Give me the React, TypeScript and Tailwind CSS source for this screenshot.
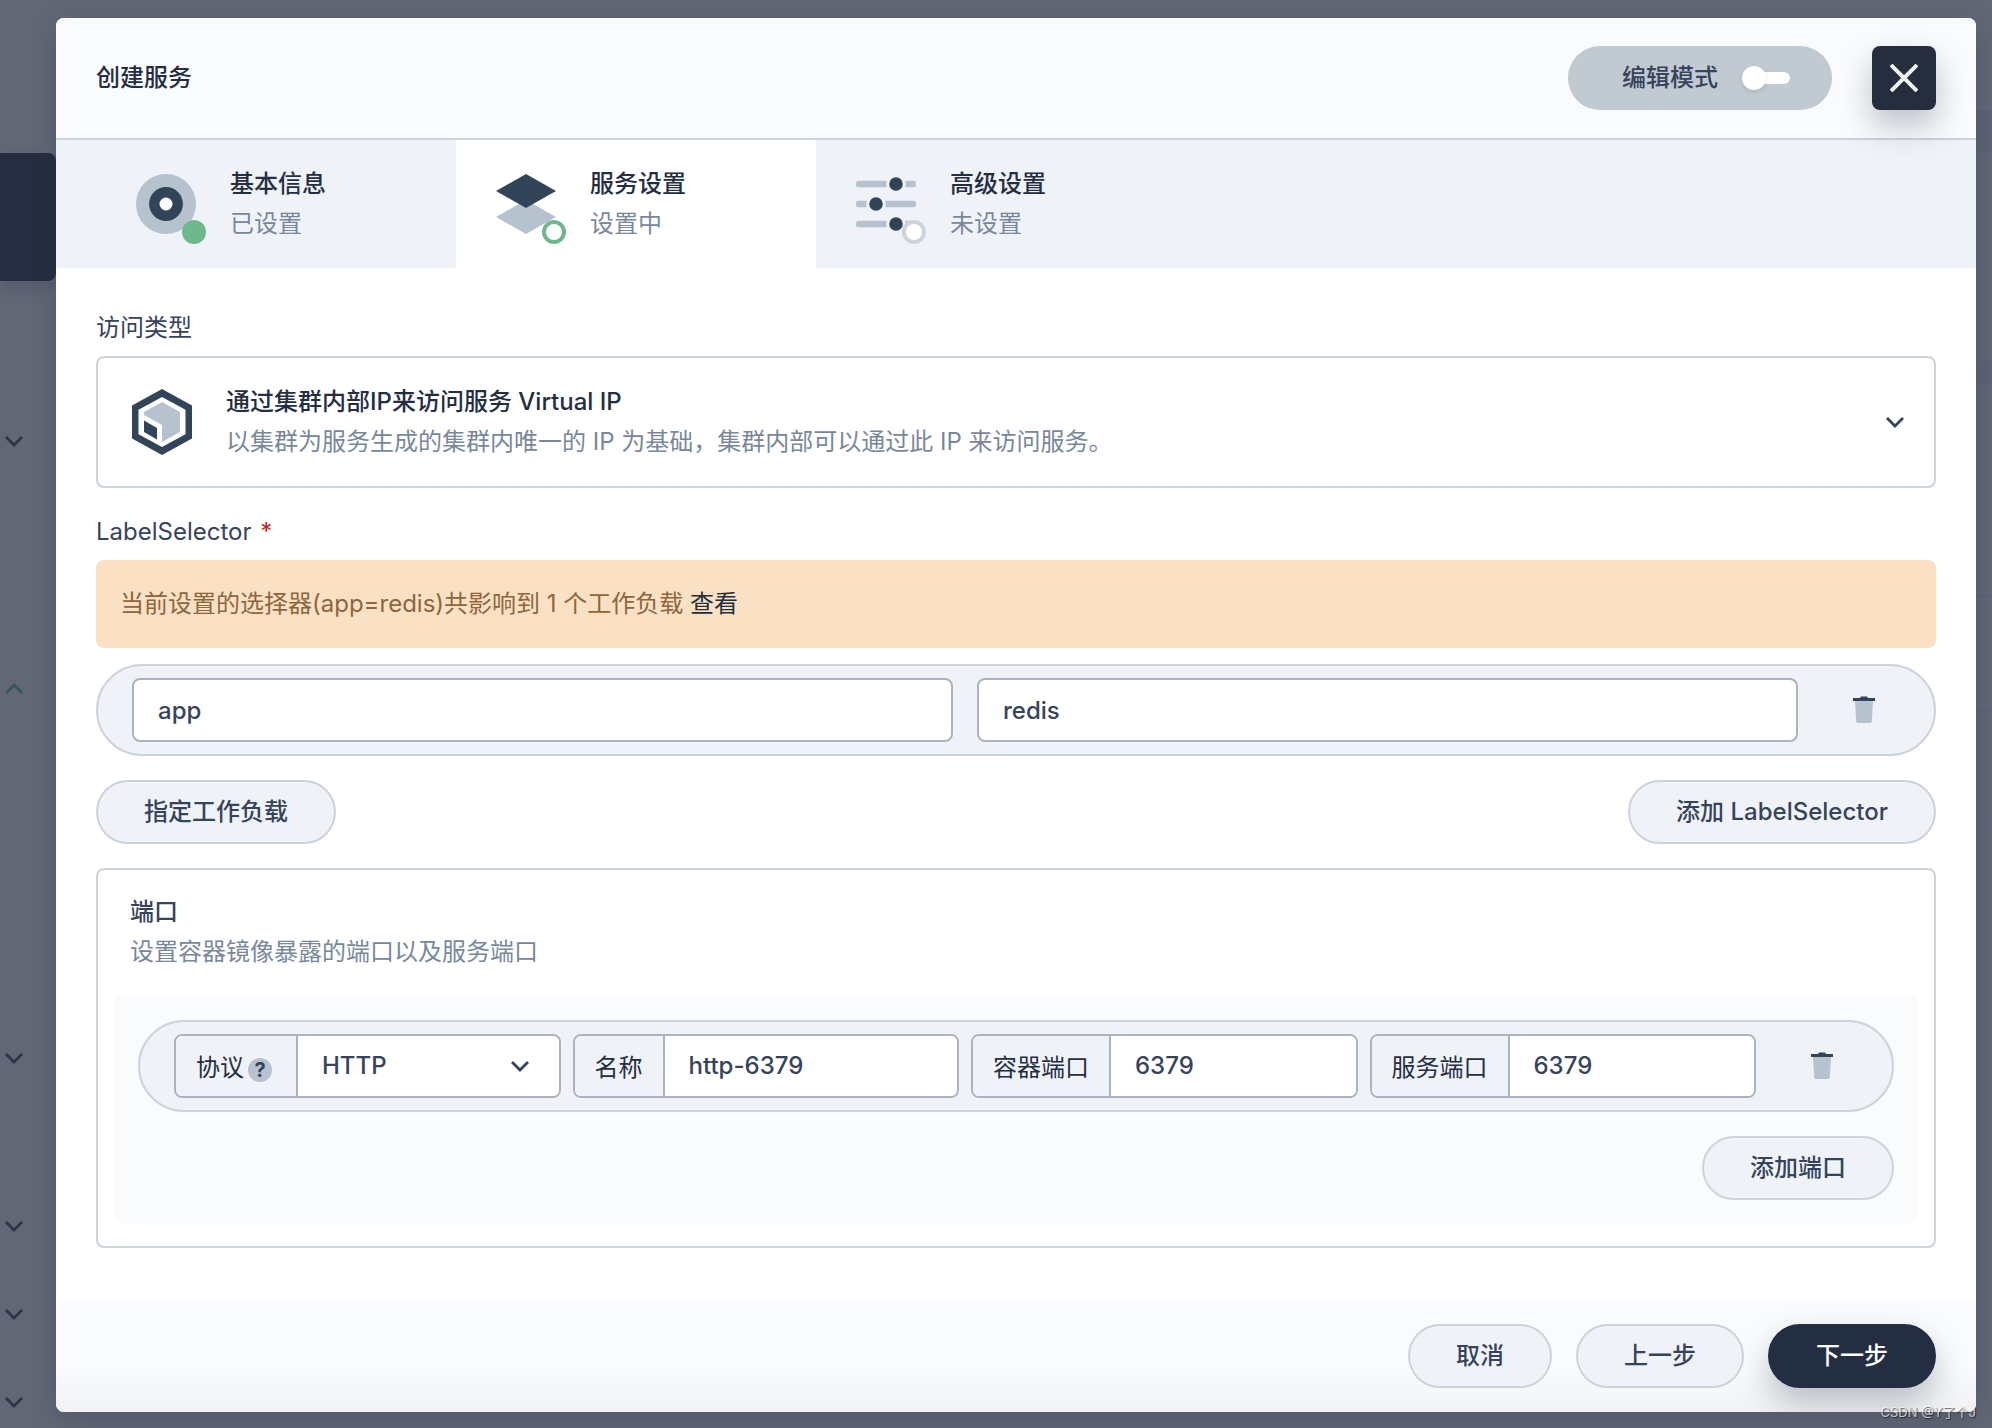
import { useState } from "react";
import type { ReactNode } from "react";

const chevronDown = "M1 1l8 8 8-8";
const chevronUp = "M1 9l8-8 8 8";

interface ChevronProps {
  up?: boolean;
  className?: string;
}

function Chevron({ up = false, className = "" }: ChevronProps) {
  return (
    <svg
      viewBox="0 0 18 10"
      fill="none"
      stroke="currentColor"
      strokeWidth={2.8}
      className={`h-[10px] w-[18px] shrink-0 overflow-visible ${className}`}
      aria-hidden="true"
    >
      <path d={up ? chevronUp : chevronDown} />
    </svg>
  );
}

function TargetIcon() {
  return (
    <svg viewBox="0 0 60 60" className="size-15" aria-hidden="true">
      <circle cx="30" cy="30" r="30" fill="#b6c2cd" />
      <circle cx="30" cy="30" r="11.7" fill="#fff" stroke="#324558" strokeWidth="10.4" />
    </svg>
  );
}

function LayersIcon() {
  return (
    <svg viewBox="0 0 60 60" className="size-15" aria-hidden="true">
      <path d="M30 26l30 17-30 17L0 43z" fill="#b6c2cd" />
      <path d="M30 0l30 17-30 17L0 17z" fill="#324558" />
    </svg>
  );
}

function SlidersIcon() {
  return (
    <svg viewBox="0 0 60 60" className="size-15" aria-hidden="true">
      <g fill="#b6c2cd">
        <rect y="6.700" width="60" height="6.600" rx="2.500" />
        <rect y="26.700" width="60" height="6.600" rx="2.500" />
        <rect y="46.700" width="60" height="6.600" rx="2.500" />
      </g>
      <g fill="#324558" stroke="#eff3f8" strokeWidth="3">
        <circle cx="40" cy="10" r="8.3" />
        <circle cx="20" cy="30" r="8.3" />
        <circle cx="40" cy="50" r="8.3" />
      </g>
    </svg>
  );
}

function ClusterIcon() {
  return (
    <svg viewBox="0 0 60 66" className="h-[66px] w-[60px] shrink-0" aria-hidden="true">
      <path d="M30 0l30 16.500v33L30 66 0 49.500v-33z" fill="#324558" />
      <path d="M30 8l23.500 12.800v24.400L30 58 6.500 45.200V20.800z" fill="#fff" />
      <path d="M30 13l18 10v20L30 53V36L12 26v-3z" fill="#b6c2cd" />
      <path d="M12 31.500l13 7.500v11.500L12 43z" fill="#324558" />
    </svg>
  );
}

function TrashIcon() {
  return (
    <svg viewBox="0 0 22 28" className="h-7 w-[22px]" aria-hidden="true">
      <path d="M2 5h18l-1.200 20.500a1.800 1.800 0 0 1-1.800 1.500H5a1.800 1.800 0 0 1-1.800-1.500z" fill="#b6c2cd" />
      <path d="M0 2h7l1-1.500h6L15 2h7v3H0z" fill="#324558" />
    </svg>
  );
}

interface PillButtonProps {
  children: ReactNode;
  primary?: boolean;
}

function PillButton({ children, primary = false }: PillButtonProps) {
  const tone = primary
    ? "border-[#242e42] bg-[#242e42] text-white shadow-[0_16px_32px_0_rgba(36,46,66,0.28)]"
    : "border-[#ccd3db] bg-[#eff3f8] text-[#36435c]";
  return (
    <button
      type="button"
      className={`h-16 rounded-full border-2 px-[46px] font-medium ${tone}`}
    >
      {children}
    </button>
  );
}

interface Step {
  title: string;
  status: string;
  icon: ReactNode;
  dot: string;
  active?: boolean;
}

const steps: Step[] = [
  {
    title: "基本信息",
    status: "已设置",
    icon: <TargetIcon />,
    dot: "border-[#6fb88c] bg-[#6fb88c]",
  },
  {
    title: "服务设置",
    status: "设置中",
    icon: <LayersIcon />,
    dot: "border-[#6fb88c] bg-white",
    active: true,
  },
  {
    title: "高级设置",
    status: "未设置",
    icon: <SlidersIcon />,
    dot: "border-[#ccd3db] bg-white",
  },
];

function StepTabs() {
  return (
    <nav className="flex bg-[#eff3f8] pl-10">
      {steps.map((step) => (
        <button
          key={step.title}
          type="button"
          className={`flex h-32 w-[360px] items-center gap-[34px] px-10 text-left ${
            step.active ? "bg-white" : ""
          }`}
        >
          <span className="relative">
            {step.icon}
            <span
              className={`absolute -right-[10px] -bottom-[10px] size-6 rounded-full border-4 ${step.dot}`}
            />
          </span>
          <span className="flex flex-col leading-10">
            <span className="font-medium text-[#242e42]">{step.title}</span>
            <span className="text-[#79879c]">{step.status}</span>
          </span>
        </button>
      ))}
    </nav>
  );
}

interface FieldRowProps {
  children: ReactNode;
  gap: string;
}

function FieldRow({ children, gap }: FieldRowProps) {
  return (
    <div className="flex items-center rounded-full border-2 border-[#ccd3db] bg-[#eff3f8] py-3 pr-[50px] pl-[34px]">
      <div className={`flex min-w-0 flex-1 ${gap}`}>{children}</div>
      <button
        type="button"
        aria-label="删除"
        className="ml-[46px] flex size-10 items-center justify-center"
      >
        <TrashIcon />
      </button>
    </div>
  );
}

const inputClass =
  "h-16 w-full min-w-0 rounded-lg border-2 border-[#abb4be] bg-white px-6 font-medium text-[#36435c] outline-none";

interface GroupFieldProps {
  id: string;
  label: string;
  help?: boolean;
  children: ReactNode;
}

function GroupField({ id, label, help = false, children }: GroupFieldProps) {
  return (
    <div className="flex h-16 min-w-0 flex-1 overflow-hidden rounded-lg border-2 border-[#abb4be] bg-white">
      <label
        htmlFor={id}
        className="flex shrink-0 items-center border-r-2 border-[#abb4be] bg-[#eff3f8] px-5 pt-1 text-[#242e42]"
      >
        {label}
        {help && (
          <span className="mx-1 mt-1 flex size-6 items-center justify-center rounded-full bg-[#b6c2cd] text-xl font-bold text-[#324558]">
            ?
          </span>
        )}
      </label>
      {children}
    </div>
  );
}

const groupInputClass =
  "w-full min-w-0 flex-1 bg-white px-6 font-medium text-[#36435c] outline-none";

function Backdrop() {
  return (
    <div className="absolute inset-0 flex justify-between text-[#2b3449]" aria-hidden="true">
      <div className="flex w-14 flex-col pt-[153px]">
        <div className="h-32 rounded-r-lg bg-[#262d40] shadow-[0_8px_16px_0_rgba(36,46,66,0.2)]" />
        <div className="flex flex-col pl-[5px]">
          <Chevron className="mt-[155px]" />
          <Chevron up className="mt-[238px] text-[#2f5a58]" />
          <Chevron className="mt-[359px]" />
          <Chevron className="mt-[158px]" />
          <Chevron className="mt-[78px]" />
          <Chevron className="mt-[78px]" />
        </div>
      </div>
      <div className="flex w-4 flex-col pt-[110px]">
        <div className="h-[43px] bg-[#5d6374]" />
        <div className="mt-[208px] h-6 bg-[#5d6374]" />
        <div className="mt-[210px] h-[2px] bg-[#5d6374]" />
        <div className="mt-28 h-[2px] bg-[#5d6374]" />
        <div className="mt-28 h-[2px] bg-[#5d6374]" />
      </div>
    </div>
  );
}

export default function App() {
  const [editMode, setEditMode] = useState(false);

  return (
    <div className="relative flex min-h-screen bg-[#626776] pt-[18px] pr-4 pb-4 pl-14 font-[Inter,'Noto_Sans_CJK_SC',sans-serif] text-2xl text-[#36435c]">
      <Backdrop />

      <main className="relative flex min-w-0 flex-1 flex-col overflow-hidden rounded-lg bg-white shadow-[0_8px_24px_0_rgba(36,46,66,0.25)]">
        <header className="relative z-10 flex items-center gap-10 border-b-2 border-[#ccd3db] bg-[#f9fbfd] px-10 py-7">
          <h1 className="flex-1 font-medium text-[#242e42]">创建服务</h1>
          <label className="flex h-16 items-center gap-6 rounded-full bg-[#c1c9d1] pr-[42px] pl-[54px] font-medium">
            编辑模式
            <input
              type="checkbox"
              role="switch"
              className="sr-only"
              checked={editMode}
              onChange={(e) => setEditMode(e.target.checked)}
            />
            <span className="flex w-12 items-center">
              <span className="z-10 size-6 rounded-full bg-white shadow-[0_2px_4px_0_rgba(36,46,66,0.12)]" />
              <span className="-ml-3 h-3 flex-1 rounded-full bg-white" />
            </span>
          </label>
          <button
            type="button"
            aria-label="关闭"
            className="flex size-16 items-center justify-center rounded-lg bg-[#262d3f] shadow-[0_16px_32px_0_rgba(36,46,66,0.28)]"
          >
            <svg
              viewBox="0 0 28 28"
              className="size-7"
              stroke="#f0f0f0"
              strokeWidth="4"
              aria-hidden="true"
            >
              <path d="M1 1l26 26M27 1L1 27" />
            </svg>
          </button>
        </header>

        <StepTabs />

        <div className="flex flex-1 flex-col px-10 pt-10">
          <p className="leading-10">访问类型</p>
          <button
            type="button"
            className="mt-2 flex h-33 items-center rounded-lg border-2 border-[#ccd3db] bg-white pr-[30px] pl-[34px] text-left"
          >
            <ClusterIcon />
            <span className="ml-[34px] flex flex-1 flex-col leading-10">
              <span className="font-medium text-[#242e42]">
                通过集群内部IP来访问服务 Virtual IP
              </span>
              <span className="text-[#79879c]">
                以集群为服务生成的集群内唯一的 IP 为基础，集群内部可以通过此 IP 来访问服务。
              </span>
            </span>
            <Chevron className="text-[#324558]" />
          </button>

          <p className="mt-6 leading-10">
            LabelSelector <span className="ml-0.5 text-[#ca2621]">*</span>
          </p>
          <div className="mt-2 flex h-22 items-center rounded-lg bg-[#fae1c3] px-6 text-[#8d663e]">
            <p>
              当前设置的选择器(app=redis)共影响到 1 个工作负载{" "}
              <a href="#workloads" className="text-[#242e42]">
                查看
              </a>
            </p>
          </div>

          <div className="mt-4">
            <FieldRow gap="gap-6">
              <input aria-label="键" defaultValue="app" className={inputClass} />
              <input aria-label="值" defaultValue="redis" className={inputClass} />
            </FieldRow>
          </div>
          <div className="mt-6 flex justify-between">
            <PillButton>指定工作负载</PillButton>
            <PillButton>添加 LabelSelector</PillButton>
          </div>

          <section className="mt-6 rounded-lg border-2 border-[#ccd3db] px-4 pt-[22px] pb-[22px]">
            <div className="px-4 leading-10">
              <h2 className="font-medium">端口</h2>
              <p className="text-[#79879c]">设置容器镜像暴露的端口以及服务端口</p>
            </div>
            <div className="mt-6 flex flex-col gap-6 rounded-lg bg-[#f9fbfd] p-6">
              <FieldRow gap="gap-3">
                <GroupField id="protocol" label="协议" help>
                  <div className="relative flex min-w-0 flex-1 items-center">
                    <select
                      id="protocol"
                      defaultValue="HTTP"
                      className={`h-full appearance-none ${groupInputClass}`}
                    >
                      <option>HTTP</option>
                      <option>HTTPS</option>
                      <option>TCP</option>
                      <option>UDP</option>
                    </select>
                    <Chevron className="pointer-events-none absolute right-[30px] text-[#324558]" />
                  </div>
                </GroupField>
                <GroupField id="port-name" label="名称">
                  <input id="port-name" defaultValue="http-6379" className={groupInputClass} />
                </GroupField>
                <GroupField id="container-port" label="容器端口">
                  <input id="container-port" defaultValue="6379" className={groupInputClass} />
                </GroupField>
                <GroupField id="service-port" label="服务端口">
                  <input id="service-port" defaultValue="6379" className={groupInputClass} />
                </GroupField>
              </FieldRow>
              <div className="flex justify-end">
                <PillButton>添加端口</PillButton>
              </div>
            </div>
          </section>
        </div>

        <footer className="mt-[52px] flex justify-end gap-6 bg-linear-to-b from-[#f9fbfd] from-60% to-[#f1f2f4] px-10 py-6">
          <PillButton>取消</PillButton>
          <PillButton>上一步</PillButton>
          <PillButton primary>下一步</PillButton>
        </footer>
      </main>

      <span className="absolute right-4 bottom-1.5 text-[13px] leading-5 text-white/70 [text-shadow:1px_1px_1px_rgba(0,0,0,0.6)]">
        CSDN @Y了个J
      </span>
    </div>
  );
}
